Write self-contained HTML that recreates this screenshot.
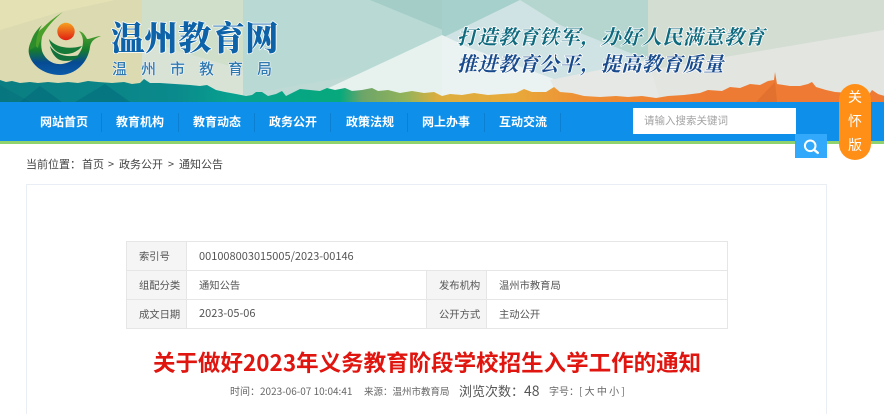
<!DOCTYPE html>
<html lang="zh-CN"><head><meta charset="utf-8"><title>关于做好2023年义务教育阶段学校招生入学工作的通知</title>
<style>
html,body{margin:0;padding:0;background:#fff}
body{width:884px;height:408px;overflow:hidden;position:relative;font-family:"Liberation Sans","Noto Sans CJK SC",sans-serif;color:#555}
.a{position:absolute;white-space:nowrap}
.n{font-family:"Noto Sans CJK SC",sans-serif}
.nav{top:113px;font:700 12px/18px "Noto Sans CJK SC",sans-serif;color:#fff}
.sep{top:113px;width:1px;height:19px;background:#0b7fd2}
.cell{position:absolute;box-sizing:border-box;border:1px solid #e6e6e6;font:10.3px/27px "Noto Sans CJK SC",sans-serif;color:#555;padding-left:12px;white-space:nowrap}
.th{background:#f5f5f5}
.m{top:384px;font:10px/14px "Noto Sans CJK SC",sans-serif;color:#666}
.b{top:155px;font:11px/18px "Noto Sans CJK SC",sans-serif;color:#444}
</style></head><body>
<svg class="a" style="left:0;top:0" width="884" height="102" viewBox="0 0 884 102">
<defs>
<linearGradient id="g" x1="0" x2="884" y1="0" y2="0" gradientUnits="userSpaceOnUse">
<stop offset="0" stop-color="#0a7e82"/><stop offset=".2" stop-color="#0a8a8c"/><stop offset=".26" stop-color="#08a08f"/><stop offset=".385" stop-color="#07a97c"/><stop offset=".41" stop-color="#6ca569"/><stop offset=".46" stop-color="#94b35a"/><stop offset=".495" stop-color="#dcae3f"/><stop offset=".58" stop-color="#e8aa3a"/><stop offset=".66" stop-color="#ee8f35"/><stop offset=".8" stop-color="#ee7b33"/><stop offset="1" stop-color="#ee7a33"/></linearGradient>
<linearGradient id="sun" x1="0" x2="0" y1="0" y2="1"><stop offset="0" stop-color="#f5a01f"/><stop offset="1" stop-color="#e01f12"/></linearGradient>
<linearGradient id="sw" x1="0" x2="0" y1="0" y2="1"><stop offset="0" stop-color="#6ab52e"/><stop offset=".5" stop-color="#167b2e"/><stop offset=".75" stop-color="#064b93"/><stop offset="1" stop-color="#0a5aa8"/></linearGradient>
</defs>
<rect width="884" height="102" fill="#bfdad4"/>
<polygon points="0,0 142,0 142,90 0,90" fill="#dcdab0"/>
<polygon points="0,0 115,0 60,12 0,30" fill="#e4e1b5"/>
<polygon points="142,0 243,0 243,95 142,90" fill="#cfdfca"/>
<polygon points="142,40 243,70 243,95 142,90" fill="#d8e3d6"/>
<polygon points="243,0 442,0 442,60 243,95" fill="#b9d9d4"/>
<polygon points="370,0 443,30 443,0" fill="#a4cdc8"/>
<polygon points="442,0 520,0 442,38" fill="#a6d0cb"/>
<polygon points="520,0 648,0 648,60 560,25" fill="#b5d6cf"/>
<polygon points="442,38 520,0 560,25 660,65 560,90 442,70" fill="#d0e3e4"/>
<polygon points="648,0 884,0 884,90 648,90" fill="#d3ddd1"/>
<polygon points="648,70 884,30 884,95 648,100" fill="#e2e5e0"/>
<polygon points="320,92 442,35 442,100 345,90" fill="#e7f2ee"/>
<polygon points="442,35 470,48 570,85 520,100 442,100" fill="#eaf3f1"/>
<polygon points="550,80 648,60 660,100 560,100" fill="#e6e8e5"/>
<path fill="url(#g)" d="M0,80 6,82 12,81 20,83 30,82 38,83 48,82 58,83 68,82 78,83 88,81 98,82 112,83 124,82 132,84 140,83 144,79 150,83 160,83 175,84 190,85 200,86 207,85 216,90 225,92 236,94 246,96 252,95 256,92 262,92 268,96 276,94 282,91 286,96 292,93 300,89 310,90 320,91 327,88 335,90 345,88 352,91 362,90 372,88 378,91 388,90 400,93 412,91 424,93 434,92 442,96 450,94 462,95 474,93 488,95 502,94 516,93 524,89 532,92 546,92 554,87 560,92 572,93 584,96 600,97 616,96 628,97 642,96 656,98 668,96 684,95 700,93 708,90 722,91 730,87 740,88 750,84 760,85 768,81 774,80 775,72 777,84 790,86 800,86 808,84 812,82 816,87 826,90 835,92 850,93 868,96 872,90 878,94 884,96 L884,102 0,102Z"/>
<path fill="#e2702f" d="M756,102 775,82 777,102Z"/>
<path fill="#005d76" opacity=".35" d="M20,102 40,86 62,102Z M75,102 105,84 130,102Z"/>
<polygon points="30,102 0,85 0,102" fill="#045f72" opacity=".25"/>
<!-- logo -->
<circle cx="66" cy="31.5" r="8.7" fill="url(#sun)"/>
<path fill="url(#sw)" d="M47,25 C35,32 27,44 29,54 C32,67 46,75 60,75 C75,75 88,63 90,47 C91,42 93,39 101,36 C96,36 91,39 87,39 C85,35 83,32 79,31 C83,36 84,41 82,48 C78,58 70,63 62,64 C52,65 45,59 42,51 C40,42 42,33 47,25Z"/>
<path fill="#4aa02a" d="M63,12 C50,20 36,32 33,44 L38,48 C40,36 50,22 63,12Z"/>
<path fill="#2c8c2c" d="M42,25 C34,32 30,40 30,50 L36,46 C36,38 38,31 42,25Z"/>
<path fill="#157a38" d="M49,39 C55,47 68,50 82,46 C78,52 68,56 60,53 C54,51 50,45 49,39Z"/>
<path fill="#12703c" d="M50,46 C56,55 66,58 80,55 C76,61 66,62 60,60 C55,58 51,52 50,46Z"/>
<!-- slogan + logo words -->
<g style="paint-order:stroke" stroke="#fff" stroke-linejoin="round">
<text x="111" y="50" font-family="'Noto Serif CJK SC',serif" font-weight="900" font-size="33.5" fill="#0e63a8" stroke-width="1.5">温州教育网</text>
<text x="112" y="74" font-family="'Noto Sans CJK SC',sans-serif" font-weight="500" font-size="15" fill="#2f78b0" stroke-width="1" letter-spacing="14">温州市教育局</text>
<text transform="translate(457 44) skewX(-14)" font-family="'Noto Serif CJK SC',serif" font-weight="700" font-size="20" fill="#0f6a7e" stroke-width="1.6" letter-spacing=".55">打造教育铁军&#65292;办好人民满意教育</text>
<text transform="translate(457 71) skewX(-14)" font-family="'Noto Serif CJK SC',serif" font-weight="700" font-size="20" fill="#184a8c" stroke-width="1.6" letter-spacing=".55">推进教育公平&#65292;提高教育质量</text>
</g>
</svg>
<div class="a" style="left:0;top:102px;width:884px;height:39px;background:#0d8fea"></div>
<div class="a" style="left:0;top:141px;width:884px;height:3px;background:#90d26e"></div>
<div class="a nav" style="left:40px">网站首页</div><div class="a sep" style="left:101px"></div>
<div class="a nav" style="left:116px">教育机构</div><div class="a sep" style="left:178px"></div>
<div class="a nav" style="left:193px">教育动态</div><div class="a sep" style="left:254px"></div>
<div class="a nav" style="left:269px">政务公开</div><div class="a sep" style="left:330px"></div>
<div class="a nav" style="left:346px">政策法规</div><div class="a sep" style="left:407px"></div>
<div class="a nav" style="left:422px">网上办事</div><div class="a sep" style="left:484px"></div>
<div class="a nav" style="left:499px">互动交流</div><div class="a sep" style="left:560px"></div>
<div class="a n" style="left:633px;top:108px;width:163px;height:26px;background:#fff;color:#a3a3a3;font-size:10.5px;line-height:26px;text-indent:11px">请输入搜索关键词</div>
<div class="a" style="left:795px;top:134px;width:32px;height:24px;background:#33a9fb"></div>
<svg class="a" style="left:795px;top:134px" width="32" height="24" viewBox="0 0 32 24"><circle cx="15.2" cy="11.8" r="5.3" fill="none" stroke="#fff" stroke-width="2"/><path d="M19.2 15.8 L22.8 18.8" stroke="#fff" stroke-width="2.4" stroke-linecap="round"/></svg>
<div class="a n" style="left:839px;top:84px;width:32px;height:76px;border-radius:16px;background:#ff8f17;color:#fff;font-size:14px;line-height:24px;text-align:center;white-space:normal;box-sizing:border-box;padding-top:1px">关<br>怀<br>版</div>
<div class="a b" style="left:26px">当前位置&#65306;</div>
<div class="a b" style="left:82px">首页</div>
<div class="a b" style="left:108px">&gt;</div>
<div class="a b" style="left:119px">政务公开</div>
<div class="a b" style="left:168px">&gt;</div>
<div class="a b" style="left:179px">通知公告</div>
<div class="a" style="left:26px;top:184px;width:801px;height:230px;box-sizing:border-box;border:1px solid #e8eef3;border-bottom:0"></div>
<div class="cell th" style="left:126px;top:241px;width:61px;height:30px">索引号</div>
<div class="cell" style="left:186px;top:241px;width:542px;height:30px;font-size:11px;line-height:28px">001008003015005/2023-00146</div>
<div class="cell th" style="left:126px;top:270px;width:61px;height:30px">组配分类</div>
<div class="cell" style="left:186px;top:270px;width:241px;height:30px">通知公告</div>
<div class="cell th" style="left:426px;top:270px;width:61px;height:30px">发布机构</div>
<div class="cell" style="left:486px;top:270px;width:242px;height:30px">温州市教育局</div>
<div class="cell th" style="left:126px;top:299px;width:61px;height:30px">成文日期</div>
<div class="cell" style="left:186px;top:299px;width:241px;height:30px;font-size:11px">2023-05-06</div>
<div class="cell th" style="left:426px;top:299px;width:61px;height:30px">公开方式</div>
<div class="cell" style="left:486px;top:299px;width:242px;height:30px">主动公开</div>
<div class="a n" style="left:153px;top:346px;font-size:22.5px;line-height:32px;font-weight:700;color:#e0150f">关于做好2023年义务教育阶段学校招生入学工作的通知</div>
<div class="a m" style="left:230px">时间&#65306;2023-06-07 10:04:41</div>
<div class="a m" style="left:364px;font-size:9.5px">来源&#65306;温州市教育局</div>
<div class="a n" style="left:459px;top:382px;font-size:13px;line-height:18px;color:#555">浏览次数&#65306;</div>
<div class="a n" style="left:524px;top:382px;font-size:14px;line-height:18px;color:#555">48</div>
<div class="a m" style="left:549px">字号&#65306;[ 大 中 小 ]</div>
</body></html>
